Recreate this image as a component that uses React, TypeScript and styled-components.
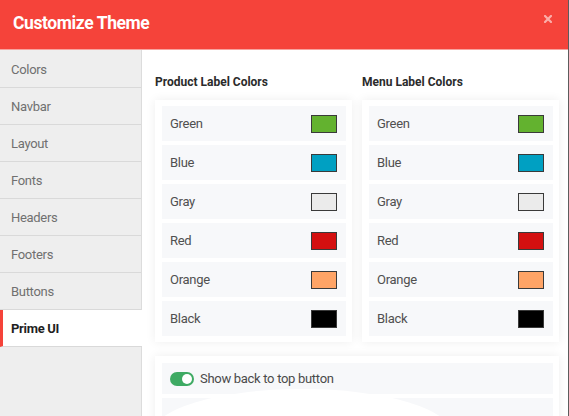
import React from 'react';
import styled, { createGlobalStyle } from 'styled-components';

const GlobalStyle = createGlobalStyle`
  html, body {
    margin: 0;
    padding: 0;
    background: #ffffff;
  }
  * {
    box-sizing: border-box;
  }
`;

const Modal = styled.div`
  position: relative;
  width: 569px;
  height: 416px;
  overflow: hidden;
  display: flex;
  flex-direction: column;
  font-family: Roboto, 'Liberation Sans', sans-serif;
  border-right: 1px solid #5c5c5c;
  background: #ffffff;
`;

const Header = styled.header`
  height: 50px;
  flex: 0 0 50px;
  display: flex;
  align-items: center;
  justify-content: space-between;
  padding: 0 16px 3px 13px;
  background: #f5433a;
  border-bottom: 1px solid #f7a39e;
`;

const Title = styled.h1`
  margin: 0;
  font-size: 17.5px;
  font-weight: 700;
  color: #ffffff;
  letter-spacing: -0.4px;
`;

const CloseButton = styled.button`
  border: 0;
  padding: 0;
  background: none;
  width: 8px;
  height: 8px;
  display: flex;
  align-items: center;
  justify-content: center;
  margin-bottom: 8px;
  cursor: pointer;
`;

const Body = styled.div`
  flex: 1;
  display: flex;
  min-height: 0;
`;

const Sidebar = styled.nav`
  width: 142px;
  flex: 0 0 142px;
  background: #eeeeee;
  border-right: 1px solid #dcdcdc;
  display: flex;
  flex-direction: column;
  padding-top: 1px;
`;

const NavItem = styled.div<{ $active?: boolean }>`
  height: 37px;
  display: flex;
  align-items: center;
  padding-left: ${(p) => (p.$active ? '8px' : '11px')};
  margin-right: ${(p) => (p.$active ? '-1px' : '0')};
  font-size: 13px;
  letter-spacing: -0.3px;
  border-bottom: 1px solid #d9d9d9;
  color: ${(p) => (p.$active ? '#1f1f1f' : '#707070')};
  font-weight: ${(p) => (p.$active ? 700 : 400)};
  background: ${(p) => (p.$active ? '#ffffff' : 'transparent')};
  border-left: ${(p) => (p.$active ? '3px solid #f5433a' : '0')};
`;

const Content = styled.main`
  flex: 1;
  padding: 24px 9px 0 13px;
  display: flex;
  flex-direction: column;
  gap: 14px;
  background: #ffffff;
`;

const Columns = styled.div`
  display: grid;
  grid-template-columns: 197px 197px;
  gap: 10px;
`;

const Column = styled.section`
  display: flex;
  flex-direction: column;
`;

const Heading = styled.h2`
  margin: 0 0 10px 0;
  font-size: 12px;
  font-weight: 700;
  color: #2b2b2b;
  line-height: 16px;
`;

const Card = styled.div`
  background: #ffffff;
  box-shadow: 0 0 10px rgba(0, 0, 0, 0.07);
  padding: 6px 6px 6px 7px;
  display: flex;
  flex-direction: column;
  gap: 4px;
`;

const ColorRow = styled.div`
  height: 35px;
  display: flex;
  align-items: center;
  justify-content: space-between;
  padding: 0 9px 0 8px;
  background: #f7f8fa;
  font-size: 13px;
  letter-spacing: -0.3px;
  color: #505050;
`;

const Swatch = styled.span<{ $color: string }>`
  width: 26px;
  height: 18px;
  background: ${(p) => p.$color};
  border: 1px solid #3a3a3a;
`;

const OptionsCard = styled(Card)`
  padding: 7px 6px 7px 7px;
`;

const OptionRow = styled.div`
  height: 31px;
  display: flex;
  align-items: center;
  gap: 6px;
  padding-left: 8px;
  background: #f7f8fa;
  font-size: 13px;
  letter-spacing: -0.3px;
  color: #4a4a4a;
`;

const Toggle = styled.span<{ $on?: boolean }>`
  position: relative;
  width: 24px;
  height: 14px;
  border-radius: 7px;
  background: ${(p) => (p.$on ? '#3eaa63' : '#cccccc')};

  &::after {
    content: '';
    position: absolute;
    top: 2px;
    left: ${(p) => (p.$on ? '12px' : '2px')};
    width: 10px;
    height: 10px;
    border-radius: 50%;
    background: #ffffff;
  }
`;

const Blob = styled.div`
  position: absolute;
  left: 152px;
  top: 389px;
  width: 300px;
  height: 90px;
  border-radius: 50%;
  background: #ffffff;
`;

const navItems = ['Colors', 'Navbar', 'Layout', 'Fonts', 'Headers', 'Footers', 'Buttons', 'Prime UI'];

const swatches = [
  { name: 'Green', color: '#63b22f' },
  { name: 'Blue', color: '#00a0c2' },
  { name: 'Gray', color: '#ebebeb' },
  { name: 'Red', color: '#d41010' },
  { name: 'Orange', color: '#ffa466' },
  { name: 'Black', color: '#000000' },
];

const ColorGroup = ({ title }: { title: string }) => (
  <Column>
    <Heading>{title}</Heading>
    <Card>
      {swatches.map((s) => (
        <ColorRow key={s.name}>
          {s.name}
          <Swatch $color={s.color} />
        </ColorRow>
      ))}
    </Card>
  </Column>
);

const App = () => {
  return (
    <Modal>
      <GlobalStyle />
      <Header>
        <Title>Customize Theme</Title>
        <CloseButton aria-label="close">
          <svg width="8" height="8" viewBox="0 0 8 8">
            <path d="M1 1L7 7M7 1L1 7" stroke="#fbaea9" strokeWidth="2.2" strokeLinecap="square" />
          </svg>
        </CloseButton>
      </Header>
      <Body>
        <Sidebar>
          {navItems.map((item) => (
            <NavItem key={item} $active={item === 'Prime UI'}>
              {item}
            </NavItem>
          ))}
        </Sidebar>
        <Content>
          <Columns>
            <ColorGroup title="Product Label Colors" />
            <ColorGroup title="Menu Label Colors" />
          </Columns>
          <OptionsCard>
            <OptionRow>
              <Toggle $on />
              Show back to top button
            </OptionRow>
            <OptionRow />
          </OptionsCard>
        </Content>
      </Body>
      <Blob />
    </Modal>
  );
};

export default App;
